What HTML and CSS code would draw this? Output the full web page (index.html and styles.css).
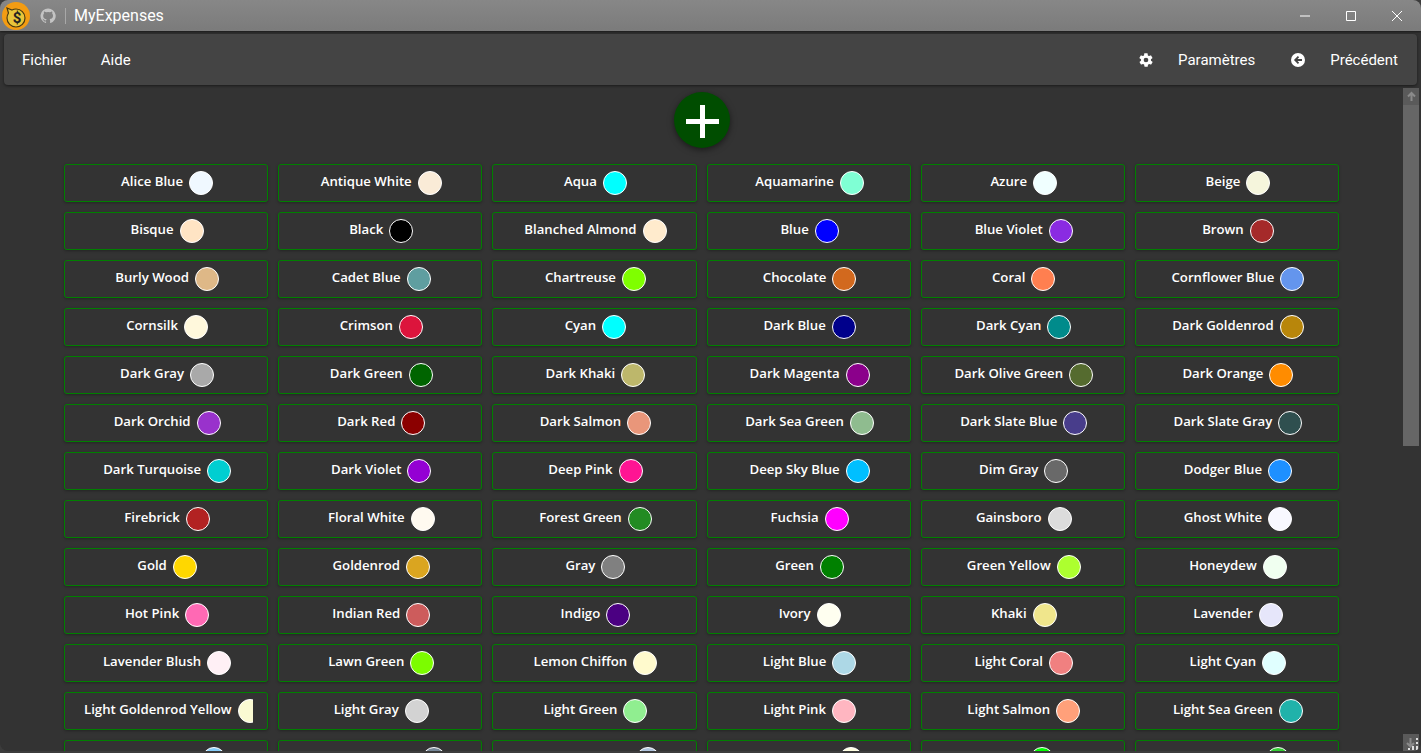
FILE: index.html
```html
<!DOCTYPE html>
<html lang="fr">
<head>
    <meta charset="UTF-8">
    <title>MyExpenses</title>
    <link rel="stylesheet" href="styles.css">
</head>
<body>
    <div class="window">
        <div class="titlebar">
            <div class="logo">
                <svg width="24" height="24" viewBox="0 0 24 24">
                    <path d="M3 4l5 2a9 9 0 0 1 4-1a9 9 0 1 1-9 9c0-2 .6-3.500 1.500-5z" fill="#e8c53a" stroke="#4a3a10" stroke-width="1.200"/>
                    <text x="13" y="19" class="logo-sign">$</text>
                </svg>
            </div>
            <svg class="gh" width="16" height="16" viewBox="0 0 16 16">
                <path d="M8 .5a7.500 7.500 0 0 0-2.400 14.600c.4.100.5-.2.500-.4v-1.300c-2.100.5-2.500-1-2.500-1-.3-.9-.8-1.100-.8-1.100-.7-.5.100-.5.100-.5.700.1 1.100.8 1.100.8.700 1.100 1.700.8 2.100.6.100-.5.300-.8.500-1-1.700-.2-3.400-.8-3.400-3.700 0-.8.300-1.500.8-2-.1-.2-.3-1 .1-2 0 0 .6-.2 2.100.8a7.200 7.200 0 0 1 3.800 0c1.400-1 2.100-.8 2.100-.8.400 1 .2 1.800.1 2 .5.500.8 1.200.8 2 0 2.900-1.800 3.500-3.400 3.700.3.200.5.700.5 1.400v2.100c0 .2.100.5.500.4A7.500 7.500 0 0 0 8 .5z" fill="#c4c4c4"/>
            </svg>
            <span class="sep"></span>
            <span class="app-name">MyExpenses</span>
            <div class="win-btns">
                <svg width="12" height="12" viewBox="0 0 12 12"><path d="M1 6h10" stroke="#fff" fill="none"/></svg>
                <svg width="12" height="12" viewBox="0 0 12 12"><path d="M1.500 1.500h9v9h-9z" stroke="#fff" fill="none"/></svg>
                <svg width="12" height="12" viewBox="0 0 12 12"><path d="M1 1l10 10M11 1L1 11" stroke="#fff" fill="none"/></svg>
            </div>
        </div>

        <div class="toolbar">
            <a class="menu-item">Fichier</a>
            <a class="menu-item">Aide</a>
            <span class="spacer"></span>
            <svg class="tool-icon" width="16" height="16" viewBox="0 0 24 24">
                <path fill="#fff" d="M19.400 13c.04-.3.100-.7.100-1s-.03-.7-.1-1l2.100-1.600c.2-.2.200-.4.100-.6l-2-3.500c-.1-.2-.4-.3-.6-.2l-2.500 1c-.5-.4-1.100-.7-1.700-1l-.4-2.600c0-.3-.2-.5-.5-.5h-4c-.3 0-.5.200-.5.400l-.4 2.700c-.6.200-1.100.6-1.700 1l-2.500-1c-.2-.1-.5 0-.6.200l-2 3.500c-.1.200-.1.500.1.600L4.600 11c0 .3-.1.700-.1 1s.03.700.1 1l-2.100 1.600c-.2.200-.2.400-.1.600l2 3.500c.1.200.4.300.6.200l2.500-1c.5.400 1.100.7 1.700 1l.4 2.600c0 .3.200.5.500.5h4c.3 0 .5-.2.500-.4l.4-2.700c.6-.2 1.100-.6 1.700-1l2.500 1c.2.100.5 0 .6-.2l2-3.500c.1-.2.100-.5-.1-.6zM12 15.500a3.500 3.500 0 1 1 0-7 3.500 3.500 0 0 1 0 7z"/>
            </svg>
            <a class="menu-item params">Paramètres</a>
            <svg class="tool-icon back" width="14" height="14" viewBox="0 0 14 14">
                <circle cx="7" cy="7" r="7" fill="#fff"/>
                <path d="M11 7H4.500M7.500 3.700L4.200 7l3.300 3.300" stroke="#444" stroke-width="1.800" fill="none"/>
            </svg>
            <a class="menu-item prev">Précédent</a>
        </div>

        <div class="content">
            <div class="scroll-area">
                <div class="add-row">
                    <button class="add-btn">
                        <svg width="33" height="33" viewBox="0 0 33 33"><path d="M16.500 0v33M0 16.500h33" stroke="#fff" stroke-width="5" fill="none"/></svg>
                    </button>
                </div>
                <div class="color-grid" id="grid"></div>
            </div>
            <div class="scrollbar">
                <div class="sb-btn">
                    <svg width="11" height="11" viewBox="0 0 11 11"><path d="M5.500 10V2M2 5.500l3.500-3.500 3.500 3.500" stroke="#8a8a8a" stroke-width="2" fill="none"/></svg>
                </div>
                <div class="sb-thumb"></div>
                <div class="sb-btn sb-end">
                    <svg width="16" height="16" viewBox="0 0 16 16">
                        <path d="M7.500 3v8M4 8l3.500 3.500L11 8" stroke="#8a8a8a" stroke-width="2" fill="none"/>
                        <path d="M13 3h2v2h-2zM13 7h2v2h-2zM13 11h2v2h-2zM9 11h2v2H9zM5 13h2v2H5zM9 13h2v2H9zM13 13h2v2h-2z" fill="#e0e0e0"/>
                    </svg>
                </div>
            </div>
        </div>
    </div>
    <script src="colors.js"></script>
</body>
</html>
```

FILE: styles.css
```css
*{
    margin: 0;
    padding: 0;
    box-sizing: border-box;
}
html,body{
    height: 100%;
    overflow: hidden;
    background: #3c3c3c;
}
.window{
    height: 751px;
    display: flex;
    flex-direction: column;
    background: #333;
    border-radius: 8px;
    overflow: hidden;
    font-family: Roboto, "Liberation Sans", sans-serif;
    color: #fff;
}
.titlebar{
    height: 31px;
    flex: none;
    display: flex;
    align-items: center;
    background: linear-gradient(#878787, #7b7b7b);
    box-shadow: 0 1px 2px rgba(0,0,0,0.5);
    padding-left: 2px;
}
.logo{
    width: 28px;
    height: 28px;
    margin-top: 1px;
    border-radius: 50%;
    background: #f39c12;
    display: flex;
    align-items: center;
    justify-content: center;
}
.logo-sign{
    font: bold 15px Roboto, sans-serif;
    fill: #222;
    text-anchor: middle;
}
.gh{
    margin-left: 10px;
}
.sep{
    width: 1px;
    height: 16px;
    background: #a8a8a8;
    margin-left: 9px;
}
.app-name{
    margin-left: 8px;
    font-size: 16px;
}
.win-btns{
    margin-left: auto;
    display: flex;
    gap: 34px;
    padding-right: 18px;
}
.toolbar{
    height: 51px;
    flex: none;
    margin: 3px 4px 0;
    display: flex;
    align-items: center;
    background: #444;
    border-radius: 4px;
    box-shadow: 0 1px 3px rgba(0,0,0,0.5);
    padding: 0 19px 0 18px;
    font-size: 15px;
}
.menu-item{
    margin-right: 34px;
}
.spacer{
    flex: 1;
}
.tool-icon{
    margin-right: 24px;
}
.params{
    margin-right: 36px;
}
.back{
    margin-right: 25px;
}
.prev{
    margin-right: 0;
}
.content{
    flex: 1;
    min-height: 0;
    display: flex;
    padding: 3px 2px 0 0;
}
.scroll-area{
    flex: 1;
    min-width: 0;
    overflow: hidden;
    padding: 5px 64px 0;
}
.add-row{
    display: flex;
    justify-content: center;
    margin-top: -1px;
    margin-bottom: 16px;
}
.add-btn{
    width: 56px;
    height: 56px;
    border: none;
    border-radius: 50%;
    background: #004d00;
    box-shadow: 0 2px 6px rgba(0,0,0,0.5);
    display: flex;
    align-items: center;
    justify-content: center;
}
.add-btn svg{
    margin: 2px 0 0 2px;
}
.color-grid{
    display: grid;
    grid-template-columns: repeat(6, 1fr);
    gap: 10px;
}
.color-card{
    height: 38px;
    padding: 0 14px;
    display: flex;
    align-items: center;
    border: 1px solid #008000;
    border-radius: 3px;
    box-shadow: 0 1px 3px rgba(0,0,0,0.3);
}
.color-inner{
    flex: 1;
    min-width: 0;
    overflow: hidden;
    display: flex;
    align-items: center;
    justify-content: safe center;
}
.color-name{
    flex: none;
    padding: 0 5px;
    font-family: "Open Sans", sans-serif;
    font-size: 13.2px;
    font-weight: 600;
    margin-top: -4px;
}
.color-dot{
    flex: none;
    width: 24px;
    height: 24px;
    margin: 0 3px 0 1px;
    border: 1px solid #fff;
    border-radius: 50%;
}
.scrollbar{
    width: 16px;
    flex: none;
    display: flex;
    flex-direction: column;
    background: #333;
}
.sb-btn{
    height: 17px;
    background: #5a5a5a;
    display: flex;
    align-items: center;
    justify-content: center;
}
.sb-thumb{
    height: 341px;
    background: #666;
}
.sb-end{
    margin-top: auto;
}
```

FILE: colors.js
```js
var names = {
    'Alice Blue':'#f0f8ff','Antique White':'#faebd7','Aqua':'#00ffff','Aquamarine':'#7fffd4','Azure':'#f0ffff','Beige':'#f5f5dc',
    'Bisque':'#ffe4c4','Black':'#000000','Blanched Almond':'#ffebcd','Blue':'#0000ff','Blue Violet':'#8a2be2','Brown':'#a52a2a',
    'Burly Wood':'#deb887','Cadet Blue':'#5f9ea0','Chartreuse':'#7fff00','Chocolate':'#d2691e','Coral':'#ff7f50','Cornflower Blue':'#6495ed',
    'Cornsilk':'#fff8dc','Crimson':'#dc143c','Cyan':'#00ffff','Dark Blue':'#00008b','Dark Cyan':'#008b8b','Dark Goldenrod':'#b8860b',
    'Dark Gray':'#a9a9a9','Dark Green':'#006400','Dark Khaki':'#bdb76b','Dark Magenta':'#8b008b','Dark Olive Green':'#556b2f','Dark Orange':'#ff8c00',
    'Dark Orchid':'#9932cc','Dark Red':'#8b0000','Dark Salmon':'#e9967a','Dark Sea Green':'#8fbc8f','Dark Slate Blue':'#483d8b','Dark Slate Gray':'#2f4f4f',
    'Dark Turquoise':'#00ced1','Dark Violet':'#9400d3','Deep Pink':'#ff1493','Deep Sky Blue':'#00bfff','Dim Gray':'#696969','Dodger Blue':'#1e90ff',
    'Firebrick':'#b22222','Floral White':'#fffaf0','Forest Green':'#228b22','Fuchsia':'#ff00ff','Gainsboro':'#dcdcdc','Ghost White':'#f8f8ff',
    'Gold':'#ffd700','Goldenrod':'#daa520','Gray':'#808080','Green':'#008000','Green Yellow':'#adff2f','Honeydew':'#f0fff0',
    'Hot Pink':'#ff69b4','Indian Red':'#cd5c5c','Indigo':'#4b0082','Ivory':'#fffff0','Khaki':'#f0e68c','Lavender':'#e6e6fa',
    'Lavender Blush':'#fff0f5','Lawn Green':'#7cfc00','Lemon Chiffon':'#fffacd','Light Blue':'#add8e6','Light Coral':'#f08080','Light Cyan':'#e0ffff',
    'Light Goldenrod Yellow':'#fafad2','Light Gray':'#d3d3d3','Light Green':'#90ee90','Light Pink':'#ffb6c1','Light Salmon':'#ffa07a','Light Sea Green':'#20b2aa',
    'Light Sky Blue':'#87cefa','Light Slate Gray':'#778899','Light Steel Blue':'#b0c4de','Light Yellow':'#ffffe0','Lime':'#00ff00','Lime Green':'#32cd32'
};
var oGrid = document.getElementById('grid');
for (var n in names) {
    var oCard = document.createElement('div');
    oCard.className = 'color-card';
    var oInner = document.createElement('div');
    oInner.className = 'color-inner';
    var oName = document.createElement('span');
    oName.className = 'color-name';
    oName.textContent = n;
    var oDot = document.createElement('span');
    oDot.className = 'color-dot';
    oDot.style.background = names[n];
    oInner.appendChild(oName);
    oInner.appendChild(oDot);
    oCard.appendChild(oInner);
    oGrid.appendChild(oCard);
}
```
